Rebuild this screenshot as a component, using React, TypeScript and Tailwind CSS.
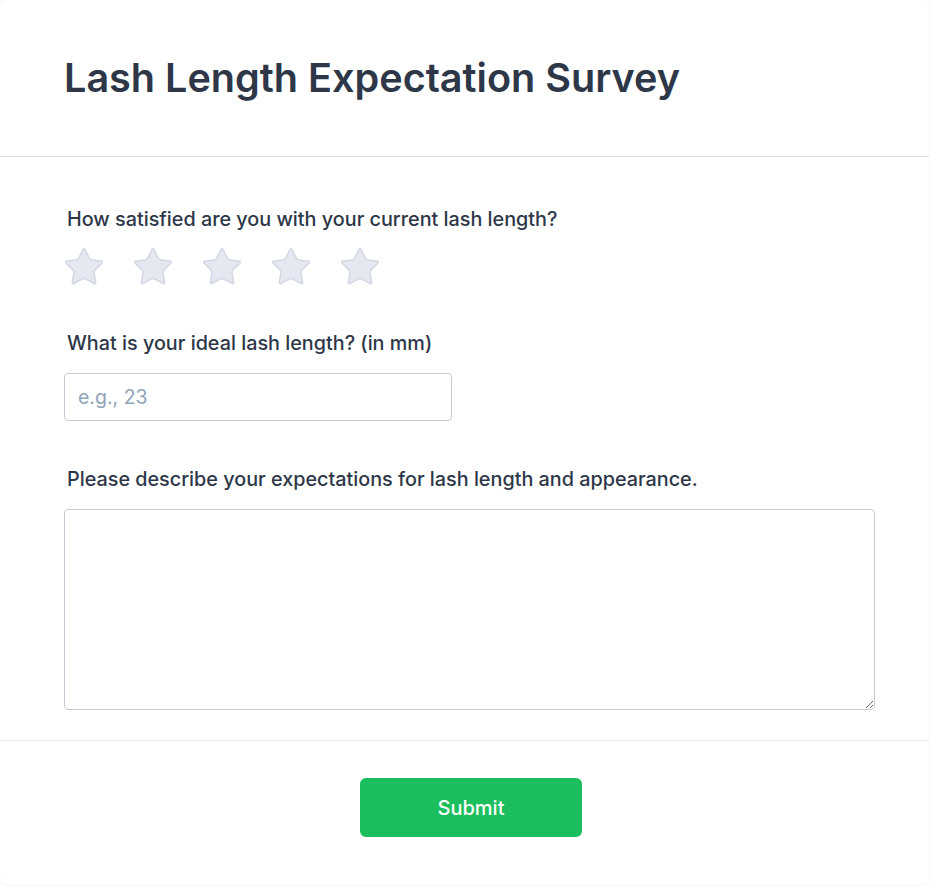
import { Star } from "lucide-react";

const FONT = { fontFamily: "Inter, 'Noto Sans', sans-serif" };

function Stars() {
  return (
    <div className="flex items-center gap-[25px] -ml-[2px] mt-3">
      {[1, 2, 3, 4, 5].map((n) => (
        <button key={n} type="button" className="block">
          <Star size={44} strokeWidth={0.8} className="text-[#d3d7e3] fill-[#e5e8f1]" />
        </button>
      ))}
    </div>
  );
}

export default function App() {
  return (
    <div className="min-h-screen bg-white" style={FONT}>
      <div className="w-[929px] bg-white rounded-lg shadow-[0_0_3px_rgba(0,0,0,0.08)]">
        <div className="pl-16 pr-[53px] pt-[58px] pb-[58px] border-b border-[#dfe2ea]">
          <h1 className="text-[39.6px] font-semibold text-[#2d3748] leading-10">
            Lash Length Expectation Survey
          </h1>
        </div>

        <div className="pl-16 pr-[54px] pt-12 pb-[30px] border-b border-[#e9ebf1]">
          <div>
            <label className="block text-[19.8px] font-medium text-[#2d3748] leading-7 pl-[3px]">
              How satisfied are you with your current lash length?
            </label>
            <Stars />
          </div>

          <div className="mt-10">
            <label className="block text-[19.8px] font-medium text-[#2d3748] leading-7 pl-[3px]">
              What is your ideal lash length? (in mm)
            </label>
            <input
              type="text"
              placeholder="e.g., 23"
              className="mt-4 block w-[388px] h-12 px-[13px] text-[19.5px] border border-[#c5cad6] rounded outline-none placeholder:text-[#90a4ba] text-[#2d3748]"
            />
          </div>

          <div className="mt-11">
            <label className="block text-[19.8px] font-medium text-[#2d3748] leading-7 pl-[3px]">
              Please describe your expectations for lash length and appearance.
            </label>
            <textarea className="mt-4 block w-full h-[201px] px-3 py-2 text-lg border border-[#c5cad6] rounded outline-none text-[#2d3748]" />
          </div>
        </div>

        <div className="pl-[66px] pr-[53px] pt-[37px] pb-12 flex justify-center">
          <button
            type="button"
            className="w-[222px] h-[59px] rounded-md bg-[#1abe5c] text-white text-xl font-medium"
          >
            Submit
          </button>
        </div>
      </div>
    </div>
  );
}
